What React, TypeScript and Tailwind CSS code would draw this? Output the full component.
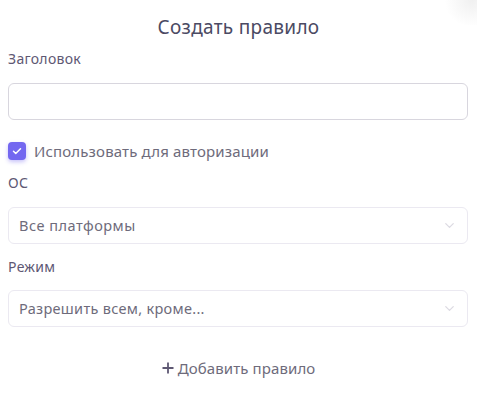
import React from "react";

const Chevron = () => (
  <svg width="15" height="15" viewBox="0 0 24 24" fill="none" stroke="#dcdae2" strokeWidth="2" strokeLinecap="round" strokeLinejoin="round">
    <path d="M6 9l6 6 6-6" />
  </svg>
);

export default function App() {
  return (
    <div className="relative w-[477px] h-[404px] bg-white overflow-hidden" style={{ fontFamily: '"Noto Sans", sans-serif' }}>
      <div className="absolute -top-[25px] -right-[25px] w-[60px] h-[50px] rounded-full bg-[radial-gradient(circle,#f0f0f0_0%,rgba(255,255,255,0)_70%)]" />
      <div className="relative flex flex-col px-2">
        <h2 className="text-center text-[19px] tracking-[0.3px] text-[#4b4a63] mt-[14px] leading-[26px]">Создать правило</h2>
        <label className="mt-[9px] text-[14px] tracking-[0.3px] leading-[20px] text-[#5e5873]">Заголовок</label>
        <div className="mt-[14px] h-[37px] w-[460px] rounded-[6px] border border-[#d8d6de]" />
        <div className="mt-[21px] flex items-center gap-[8px]">
          <div className="w-[18px] h-[18px] rounded-[4px] bg-[#7367f0] shadow-[0_2px_4px_rgba(115,103,240,0.4)] flex items-center justify-center">
            <svg width="12" height="12" viewBox="0 0 24 24" fill="none" stroke="white" strokeWidth="3" strokeLinecap="round" strokeLinejoin="round"><path d="M5 12.5l4.5 4.5L19 7.5" /></svg>
          </div>
          <span className="text-[15px] tracking-[0.15px] text-[#6e6b7b] leading-[20px]">Использовать для авторизации</span>
        </div>
        <label className="mt-[12px] text-[14px] tracking-[0.3px] leading-[20px] text-[#5e5873]">ОС</label>
        <div className="mt-[14px] h-[37px] w-[460px] rounded-[6px] border border-[#ebe9f1] flex items-center justify-between px-[10px]">
          <span className="text-[14.5px] tracking-[0.5px] text-[#6e6b7b]">Все платформы</span>
          <Chevron />
        </div>
        <label className="mt-[13px] text-[14px] tracking-[0.3px] leading-[20px] text-[#5e5873]">Режим</label>
        <div className="mt-[13px] h-[37px] w-[460px] rounded-[6px] border border-[#ebe9f1] flex items-center justify-between px-[10px]">
          <span className="text-[14.5px] tracking-[0.3px] text-[#6e6b7b]">Разрешить всем, кроме...</span>
          <Chevron />
        </div>
        <div className="mt-[31px] flex justify-center items-center gap-[4px] text-[15px] tracking-[0.1px] text-[#6e6b7b] leading-[20px]">
          <svg width="12" height="12" viewBox="0 0 12 12" stroke="#5e5873" strokeWidth="1.8"><path d="M6 0.5v11M0.5 6h11" /></svg>
          <span>Добавить правило</span>
        </div>
      </div>
    </div>
  );
}
